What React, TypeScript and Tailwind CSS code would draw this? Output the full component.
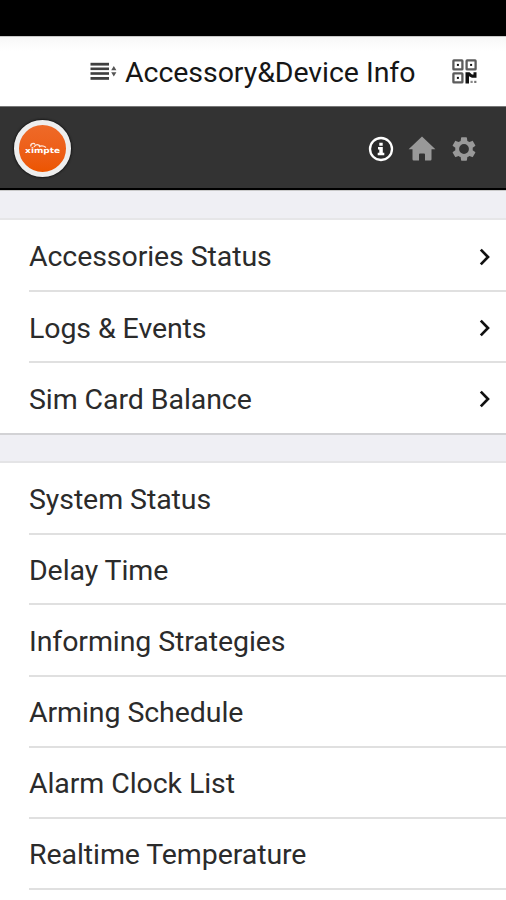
const LINKS = [
  { label: 'Accessories Status', height: 'h-[72px] pt-[5px]' },
  { label: 'Logs & Events', height: 'h-[71px] pt-[5px]' },
  { label: 'Sim Card Balance', height: 'h-[70px] pt-[4px]' },
]

const SETTINGS = [
  { label: 'System Status', height: 'h-[72px]' },
  { label: 'Delay Time', height: 'h-[70px]' },
  { label: 'Informing Strategies', height: 'h-[72px]' },
  { label: 'Arming Schedule', height: 'h-[71px]' },
  { label: 'Alarm Clock List', height: 'h-[71px]' },
  { label: 'Realtime Temperature', height: 'h-[71px]' },
]

// ─── icons ────────────────────────────────────────────────────────────
function ListIcon() {
  return (
    <svg width="28" height="20" viewBox="0 0 28 20" aria-hidden="true">
      <g fill="#3f3f3f">
        <rect x="0.5" y="0.8" width="18.500" height="2.800" />
        <rect x="0.5" y="5.500" width="18.500" height="2.600" />
        <rect x="0.5" y="10.200" width="18.500" height="2.600" />
        <rect x="0.5" y="15" width="18.500" height="2.800" />
      </g>
      <path d="M23.800 4l2.600 4.200h-5.200zM23.800 14.500l2.600-4.200h-5.200z" fill="#555" />
    </svg>
  )
}

function QrIcon() {
  return (
    <svg width="25" height="25" viewBox="0 0 25 25" aria-hidden="true">
      <g fill="none" stroke="#5c5c5c" strokeWidth="2.300">
        <rect x="1.400" y="1.400" width="9" height="9" rx="0.5" />
        <rect x="14.600" y="1.400" width="9" height="9" rx="0.5" />
        <rect x="1.400" y="14.400" width="9" height="9" rx="0.5" />
      </g>
      <g fill="#111">
        <rect x="4.900" y="4.900" width="2" height="2" />
        <rect x="18.100" y="4.900" width="2" height="2" />
        <rect x="4.900" y="17.900" width="2" height="2" />
        <path d="M13.500 13.300h4l2.500 2.200h1.500v-2.200h3v5.400h-4.500l-3-1.500v7.300h-3.500z" />
        <rect x="18.500" y="21.800" width="2.200" height="2.200" fill="#888" />
        <rect x="22.200" y="21.800" width="2.200" height="2.200" fill="#777" />
      </g>
    </svg>
  )
}

function InfoIcon() {
  return (
    <svg width="26" height="26" viewBox="0 0 26 26" aria-hidden="true">
      <circle cx="13" cy="13" r="11" fill="#2b2b2b" stroke="#fff" strokeWidth="2.3" />
      <path d="M11.300 6.800h3.400v2.900h-3.400zM10 11h4.800v5.800h1.500v2.400H9.700v-2.400h1.600v-3.400H10z" fill="#fff" />
    </svg>
  )
}

function HomeIcon() {
  return (
    <svg width="28" height="26" viewBox="0 0 28 26" aria-hidden="true">
      <path
        d="M14 .6L27.400 13.300H23.500V23.200Q23.500 24.400 22.300 24.400H17V18.500Q17 17.500 16 17.500H12Q11 17.500 11 18.500V24.400H5.700Q4.500 24.400 4.500 23.200V13.300H.6z"
        fill="#999"
      />
    </svg>
  )
}

function GearIcon() {
  return (
    <svg width="28" height="28" viewBox="0 0 24 24" aria-hidden="true">
      <path
        d="M19.430 12.980c.04-.32.07-.64.07-.98s-.03-.66-.07-.98l2.110-1.650c.19-.15.24-.42.12-.64l-2-3.460c-.12-.22-.39-.3-.61-.22l-2.490 1c-.52-.4-1.080-.73-1.690-.98l-.38-2.650A.488.488 0 0 0 14 2h-4c-.25 0-.46.18-.49.42l-.38 2.650c-.61.25-1.170.59-1.690.98l-2.490-1c-.23-.09-.49 0-.61.22l-2 3.460c-.13.22-.07.49.12.64l2.110 1.650c-.04.32-.07.65-.07.98s.03.66.07.98l-2.110 1.650c-.19.15-.24.42-.12.64l2 3.460c.12.22.39.3.61.22l2.490-1c.52.4 1.080.73 1.690.98l.38 2.650c.03.24.24.42.49.42h4c.25 0 .46-.18.49-.42l.38-2.650c.61-.25 1.170-.59 1.690-.98l2.490 1c.23.09.49 0 .61-.22l2-3.460c.12-.22.07-.49-.12-.64l-2.110-1.650zM12 16.200a4.200 4.200 0 1 1 0-8.400 4.200 4.200 0 0 1 0 8.400z"
        fill="#999"
      />
    </svg>
  )
}

function ChevronIcon() {
  return (
    <svg className="mb-[2px]" width="12" height="18" viewBox="0 0 12 18" aria-hidden="true">
      <path d="M1.800 1.600L9 9l-7.200 7.400" fill="none" stroke="#111" strokeWidth="2.700" />
    </svg>
  )
}

function Logo() {
  return (
    <div className="flex h-[57px] w-[57px] items-center justify-center rounded-full border-[5px] border-[#eeeeee] bg-gradient-to-b from-[#ee6a28] to-[#ec5500] pt-[4px] shadow-[0_0_2px_1px_#181818]">
      <div className="relative">
        <svg className="absolute -top-[4px] left-[1px]" width="20" height="7" viewBox="0 0 20 7" aria-hidden="true">
          <path d="M2 4.500C1 1.500 5 .5 6 2.500M5 5Q8 .5 11.500 4.500M10 5Q13 2.500 17 5.500" fill="none" stroke="#ffe8dc" strokeWidth="1.300" />
        </svg>
        <span className="block scale-x-[1.2] font-['DejaVu_Sans',sans-serif] text-[7.500px] leading-[10px] font-black text-white">ximpte</span>
      </div>
    </div>
  )
}

// ─── page ─────────────────────────────────────────────────────────────
export default function App() {
  return (
    <div className="flex h-[900px] w-[506px] flex-col overflow-hidden bg-white font-[Roboto,sans-serif] text-[28.5px] font-normal text-[#2b2b2b]">
      <div className="h-[36px] shrink-0 bg-black" />

      <header className="flex h-[70px] shrink-0 items-center border-t border-[#c8c8c8] bg-gradient-to-b from-[#f7f7f7] to-white to-20% pl-[90px] pr-[29px]">
        <ListIcon />
        <h1 className="ml-[7px] pt-[4px] leading-none tracking-[-0.05px] whitespace-nowrap text-[#161616]">Accessory&amp;Device Info</h1>
        <div className="ml-auto">
          <QrIcon />
        </div>
      </header>

      <nav className="flex h-[84px] shrink-0 items-center border-t border-b-2 border-t-[#777777] border-b-black bg-[#333333] pt-[2px] pl-[14px] pr-[28px]">
        <Logo />
        <div className="ml-auto flex items-center gap-[14px]">
          <InfoIcon />
          <HomeIcon />
          <GearIcon />
        </div>
      </nav>

      <div className="h-[30px] shrink-0 border-t border-b-2 border-t-[#c9c9c9] border-b-[#e6e6e8] bg-[#efeff4]" />

      <ul className="shrink-0 pl-[29px]">
        {LINKS.map((item) => (
          <li
            key={item.label}
            className={`flex items-center justify-between border-b-2 border-[#e0e0e0] pr-[15px] last:border-b-0 ${item.height}`}
          >
            <span className="leading-none tracking-[-0.08px]">{item.label}</span>
            <ChevronIcon />
          </li>
        ))}
      </ul>

      <div className="h-[30px] shrink-0 border-y-2 border-t-[#d2d2d5] border-b-[#e4e4e6] bg-[#efeff4]" />

      <ul className="shrink-0 pl-[29px]">
        {SETTINGS.map((item) => (
          <li key={item.label} className={`flex items-center border-b-2 border-[#e0e0e0] pt-[4px] ${item.height}`}>
            <span className="leading-none tracking-[-0.08px]">{item.label}</span>
          </li>
        ))}
      </ul>
    </div>
  )
}
